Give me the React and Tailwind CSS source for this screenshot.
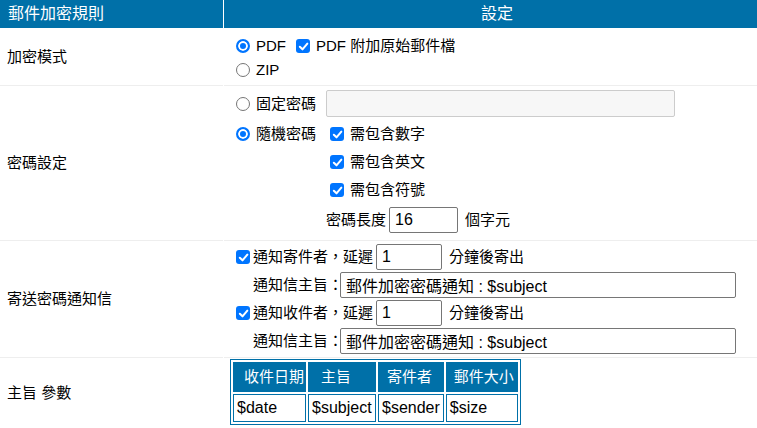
import React from 'react';

const BLUE = 'bg-[#0070a8]';

const Radio = ({ name, checked }) => (
    <input
        type="radio"
        name={name}
        defaultChecked={checked}
        className="m-0 h-[14px] w-[14px] shrink-0 appearance-none rounded-full border border-[#767676] bg-white checked:border-2 checked:border-[#0075ff] checked:bg-[#0075ff] checked:shadow-[inset_0_0_0_2px_#fff]"
    />
);

const Check = ({ className = '' }) => (
    <span className={`flex h-[14px] w-[14px] shrink-0 items-center justify-center rounded-[3px] bg-[#0075ff] ${className}`}>
        <svg width="11" height="11" viewBox="0 0 12 12" fill="none">
            <path d="M2 6.3 L4.9 9.1 L10.2 2.9" stroke="#fff" strokeWidth="2.2" strokeLinecap="round" strokeLinejoin="round" />
        </svg>
    </span>
);

const Field = ({ value, className = '' }) => (
    <input
        type="text"
        defaultValue={value}
        className={`h-[26px] rounded-[2px] border border-[#767676] bg-white px-[5px] text-[16px] text-black outline-none ${className}`}
    />
);

const Row = ({ label, children, right = '', last = false }) => (
    <div className="flex gap-px">
        <div className={`flex w-[223px] shrink-0 items-center pl-[7px] ${last ? '' : 'border-b border-[#eeeeee]'}`}>{label}</div>
        <div className={`flex-1 ${last ? '' : 'border-b border-[#eeeeee]'} ${right}`}>{children}</div>
    </div>
);

const params = [
    { head: '收件日期', val: '$date', w: 'w-[73px]', pad: 'pl-[10px]' },
    { head: '主旨', val: '$subject', w: 'w-[68px]', pad: 'pl-[12px]' },
    { head: '寄件者', val: '$sender', w: 'w-[65px]', pad: 'pl-[8px]' },
    { head: '郵件大小', val: '$size', w: 'w-[72px]', pad: 'pl-[7px]' },
];

const Notify = ({ who }) => (
    <>
        <div className="flex h-[26px] items-center">
            <Check />
            <span className="ml-[3px]">通知{who}，延遲</span>
            <Field value="1" className="ml-[3px] w-[66px]" />
            <span className="ml-[7px]">分鐘後寄出</span>
        </div>
        <div className="mt-[2px] flex h-[26px] items-center pl-[17px]">
            <span className="w-[87px] whitespace-nowrap">通知信主旨：</span>
            <Field value="郵件加密密碼通知 : $subject" className="w-[396px]" />
        </div>
    </>
);

export default function App() {
    return (
        <div className="h-[428px] w-[757px] overflow-hidden bg-white text-[15px] leading-[20px] text-black font-['Liberation_Sans','Noto_Sans_CJK_TC',sans-serif]">
            {/* header */}
            <div className="flex h-[28px] gap-px text-[16px] text-white">
                <div className={`flex w-[223px] shrink-0 items-center pl-[8px] ${BLUE}`}>郵件加密規則</div>
                <div className={`flex flex-1 items-center justify-center pl-[13px] ${BLUE}`}>設定</div>
            </div>

            <Row label="加密模式" right="pl-[12px] pt-[6px] pb-[3px]">
                <div className="flex h-[24px] items-center">
                    <Radio name="mode" checked />
                    <span className="ml-[6px]">PDF</span>
                    <Check className="ml-[10px]" />
                    <span className="ml-[6px]">PDF 附加原始郵件檔</span>
                </div>
                <div className="flex h-[24px] items-center">
                    <Radio name="mode" />
                    <span className="ml-[6px]">ZIP</span>
                </div>
            </Row>

            <Row label="密碼設定" right="pl-[12px] pt-[4px] pb-[7px]">
                <div className="flex h-[27px] items-center">
                    <div className="flex w-[90px] items-center">
                        <Radio name="pwd" />
                        <span className="ml-[6px]">固定密碼</span>
                    </div>
                    <input
                        type="text"
                        className="h-[27px] w-[349px] rounded-[2px] border border-[#cccccc] bg-[#f7f7f7] outline-none"
                    />
                </div>
                <div className="mt-[3px] flex">
                    <div className="flex h-[28px] w-[90px] items-center">
                        <Radio name="pwd" checked />
                        <span className="ml-[6px]">隨機密碼</span>
                    </div>
                    <div className="flex flex-col">
                        {['需包含數字', '需包含英文', '需包含符號'].map((t) => (
                            <div key={t} className="flex h-[28px] items-center pl-[4px]">
                                <Check />
                                <span className="ml-[6px]">{t}</span>
                            </div>
                        ))}
                        <div className="mt-[3px] flex h-[26px] items-center">
                            <span>密碼長度</span>
                            <Field value="16" className="ml-[3px] w-[69px]" />
                            <span className="ml-[7px]">個字元</span>
                        </div>
                    </div>
                </div>
            </Row>

            <Row label="寄送密碼通知信" right="pl-[12px] pt-[3px] pb-[3px]">
                <Notify who="寄件者" />
                <div className="mt-[2px]">
                    <Notify who="收件者" />
                </div>
            </Row>

            <Row label="主旨 參數" right="pl-[6px] pt-[1px] pb-[2px]" last>
                <table className="border-separate border-spacing-[2px] border border-[#0070a8]">
                    <thead>
                        <tr>
                            {params.map((p) => (
                                <th key={p.head} className={`h-[30px] ${p.w} ${p.pad} border border-[#0070a8] ${BLUE} py-0 pr-0 text-left text-[15px] font-normal whitespace-nowrap text-white`}>
                                    {p.head}
                                </th>
                            ))}
                        </tr>
                    </thead>
                    <tbody>
                        <tr>
                            {params.map((p) => (
                                <td key={p.val} className={`h-[28px] ${p.w} border border-[#0070a8] px-[3px] py-0 text-left text-[16px]`}>
                                    {p.val}
                                </td>
                            ))}
                        </tr>
                    </tbody>
                </table>
            </Row>
        </div>
    );
}
